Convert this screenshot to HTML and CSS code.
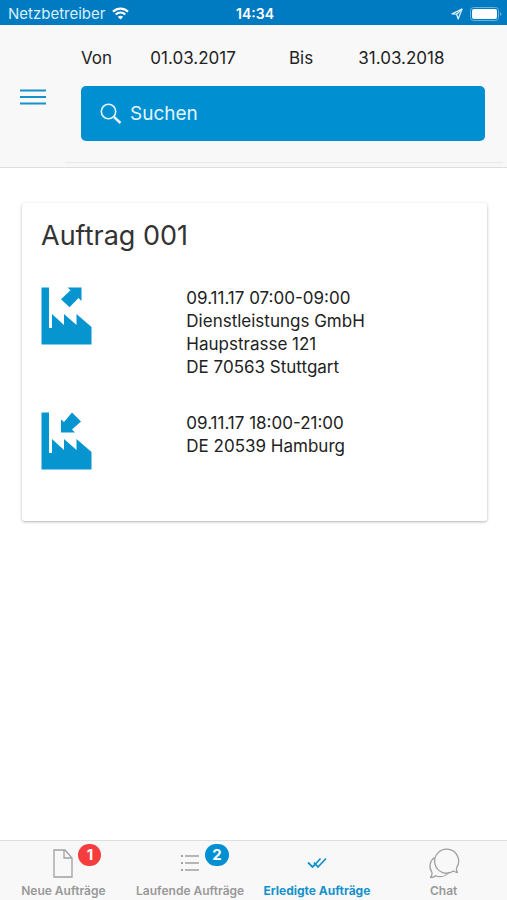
FILE: index.html
```html
<!DOCTYPE html>
<html lang="de">
<head>
<meta charset="utf-8">
<meta name="viewport" content="width=device-width, initial-scale=1">
<title>Erledigte Aufträge</title>
<link rel="stylesheet" href="styles.css">
</head>
<body>
<div class="status">
  <div class="carrier">
    <span>Netzbetreiber</span>
    <svg width="17" height="13" viewBox="0 0 17 13" fill="none" stroke="#fff" stroke-width="2.2" aria-hidden="true"><path d="M1 4.6C5.3.5 11.7.5 16 4.6M3.7 7.5c2.8-2.6 6.800-2.600 9.600 0"/><path d="M5.800 9.700c1.600-1.400 3.800-1.400 5.400 0L8.500 12.500z" fill="#fff" stroke="none"/></svg>
  </div>
  <time class="clock">14:34</time>
  <div class="indicators">
    <svg width="12" height="12" viewBox="0 0 12 12" fill="none" stroke="#d9f0fb" stroke-width="1.3" stroke-linejoin="round" aria-hidden="true"><path d="M11 1 1 5.800l4.600.4L7.200 11z"/><path d="M11 1 5.600 6.200"/></svg>
    <svg width="32" height="14" viewBox="0 0 32 14" aria-hidden="true"><rect x=".5" y=".5" width="28" height="13" rx="3" fill="none" stroke="#69b4de"/><rect x="2" y="2" width="25" height="10" rx="2" fill="#fff"/><path d="M30 5q3 2 0 4z" fill="#69b4de"/></svg>
  </div>
</div>
<header class="header">
  <button class="menu" type="button" aria-label="Menü">
    <svg width="26" height="16" viewBox="0 0 26 16" stroke="#1592cc" stroke-width="2" aria-hidden="true"><path d="M0 1.500h26M0 8h26M0 14.500h26"/></svg>
  </button>
  <form class="filter">
    <div class="dates">
      <label for="from">Von</label>
      <input id="from" type="text" value="01.03.2017">
      <label for="to">Bis</label>
      <input id="to" type="text" value="31.03.2018">
    </div>
    <label class="search">
      <svg width="22" height="22" viewBox="0 0 22 22" fill="none" stroke="#e3f5fd" aria-hidden="true"><circle cx="8.500" cy="8.500" r="7.200" stroke-width="1.600"/><path d="m14 14 6.500 6" stroke-width="2.400"/></svg>
      <input type="search" placeholder="Suchen" aria-label="Suchen">
    </label>
  </form>
</header>
<main class="content">
  <article class="card">
    <h1>Auftrag 001</h1>
    <div class="stop">
      <svg width="51" height="58" viewBox="0 0 51 58" fill="#0795d0" aria-hidden="true"><path d="M.5.500H8V41h3V27l12 11V27l12.500 11V27L50.500 40v17.500H.5z"/><path d="M26.500.500h14V14l-3-3-9 9.300-8.500-8 9.500-9z"/></svg>
      <p>09.11.17 07:00-09:00<br>Dienstleistungs GmbH<br>Haupstrasse 121<br>DE 70563 Stuttgart</p>
    </div>
    <div class="stop">
      <svg width="51" height="58" viewBox="0 0 51 58" fill="#0795d0" aria-hidden="true"><path d="M.5.500H8V41h3V27l12 11V27l12.500 11V27L50.500 40v17.500H.5z"/><path d="M31 .500 40 9.500l-9 8 3 3H20v-13l3 2.500z"/></svg>
      <p>09.11.17 18:00-21:00<br>DE 20539 Hamburg</p>
    </div>
  </article>
</main>
<nav class="tabs">
  <a href="#neue">
    <span class="icon"><svg width="20" height="29" viewBox="0 0 20 29" fill="none" stroke="#a0a0a0" stroke-width="1.300" aria-hidden="true"><path d="M1 1h11l7 8v19H1zM11 1v8h8"/></svg><span class="badge red">1</span></span>
    <span>Neue Aufträge</span>
  </a>
  <a href="#laufende">
    <span class="icon"><svg width="20" height="18" viewBox="0 0 20 18" stroke="#a0a0a0" aria-hidden="true"><path d="M5 2h14M5 9h14M5 16h14" stroke-width="1.300"/><path d="M1 2h2M1 9h2M1 16h2" stroke-width="2"/></svg><span class="badge blue">2</span></span>
    <span>Laufende Aufträge</span>
  </a>
  <a class="active" href="#erledigte" aria-current="page">
    <span class="icon"><svg width="20" height="12" viewBox="0 0 20 12" fill="none" stroke="#1592cc" stroke-width="1.800" aria-hidden="true"><path d="m1 5.500 4.500 4.500 3-3M7 5.500l4 4.500 8-8.500M13.500 1.500 9 6.500"/></svg></span>
    <span>Erledigte Aufträge</span>
  </a>
  <a href="#chat">
    <span class="icon"><svg width="32" height="32" viewBox="0 0 32 32" fill="none" stroke="#a0a0a0" stroke-width="1.300" stroke-linejoin="round" aria-hidden="true"><path d="M29.500 25.500c-2-.2-3-.8-4-1.500A12 12 0 1 1 28.500 21c-.2 1.500 0 3 1 4.500z"/><path d="M6.500 10.500C1.500 14 .5 20.500 4 25.500c.3 1.600-.3 3.500-1.500 5 2.500 0 4-.7 5-1.700 5 1.700 10.500.7 13.500-3.800"/></svg></span>
    <span>Chat</span>
  </a>
</nav>
</body>
</html>
```

FILE: styles.css
```css
* {
  box-sizing: border-box;
}

body {
  margin: 0;
  min-height: 100vh;
  display: flex;
  flex-direction: column;
  background: #fff;
  color: #222;
  font-family: Inter, "Liberation Sans", sans-serif;
  font-size: 17px;
}

input,
button {
  font: inherit;
  color: inherit;
  border: 0;
  padding: 0;
  background: none;
  min-width: 0;
}

svg {
  display: block;
  flex: none;
}

.status {
  display: grid;
  grid-template-columns: 1fr auto 1fr;
  align-items: center;
  height: 25px;
  padding: 2px 5px 0 8px;
  background: #007ac0;
  color: #fff;
  font-size: 14px;
}

.carrier,
.indicators {
  display: flex;
  align-items: center;
  gap: 7px;
}

.carrier {
  color: #d9f0fb;
  font-size: 15px;
  line-height: 18px;
}

.indicators {
  justify-content: flex-end;
}

.clock {
  font-weight: 600;
}

.header {
  display: flex;
  height: 143px;
  background: #f8f8f8;
  border-bottom: 1px solid #dedede;
}

.menu {
  width: 65px;
  padding-top: 2px;
  display: flex;
  justify-content: center;
  align-items: center;
}

.filter {
  flex: 1;
  min-width: 0;
  margin: 0 4px 4px 0;
  padding: 20px 18px 0 16px;
  border-bottom: 1px solid #e8e8e8;
}

.dates {
  display: grid;
  grid-template-columns: 1fr 2fr 1fr 2fr;
  align-items: center;
  height: 26px;
  margin: 0 -12px 15px 0;
}

.search {
  display: flex;
  align-items: center;
  gap: 8px;
  height: 55px;
  padding: 0 19px;
  border-radius: 5px;
  background: #008fd1;
  color: #e3f5fd;
  font-size: 19px;
}

.search input {
  flex: 1;
  outline: 0;
  appearance: none;
}

.search input::placeholder {
  color: inherit;
  opacity: 1;
}

.content {
  flex: 1;
  padding: 35px 20px 35px 22px;
}

.card {
  padding: 14px 19px 51px;
  border-radius: 3px;
  box-shadow: 0 1px 3px rgba(0, 0, 0, 0.3);
}

.card h1 {
  margin: 0 0 32px;
  font-size: 27px;
  line-height: 38px;
  font-weight: 400;
  color: #333;
}

.stop {
  display: grid;
  grid-template-columns: 1fr 2fr;
  align-items: start;
}

.stop + .stop {
  margin-top: 33px;
}

.stop p {
  margin: 0;
  padding-left: 3px;
  line-height: 23px;
}

.tabs {
  display: grid;
  grid-template-columns: repeat(4, 1fr);
  height: 60px;
  background: #f8f8f8;
  border-top: 1px solid #dedede;
}

.tabs a {
  display: flex;
  flex-direction: column;
  align-items: center;
  color: #999;
  text-decoration: none;
  font-size: 12px;
  font-weight: 600;
  line-height: 16px;
  white-space: nowrap;
}

.tabs .active {
  color: #1592cc;
  font-weight: 700;
}

.icon {
  position: relative;
  display: flex;
  align-items: center;
  height: 44px;
  margin-bottom: -2px;
}

.badge {
  position: absolute;
  top: 3px;
  left: 25px;
  min-width: 23px;
  padding: 0 7px;
  border-radius: 11px;
  color: #fff;
  font-size: 15px;
  font-weight: 700;
  line-height: 22px;
  text-align: center;
}

.red {
  background: #f53d3d;
}

.blue {
  background: #008fd1;
}
```
